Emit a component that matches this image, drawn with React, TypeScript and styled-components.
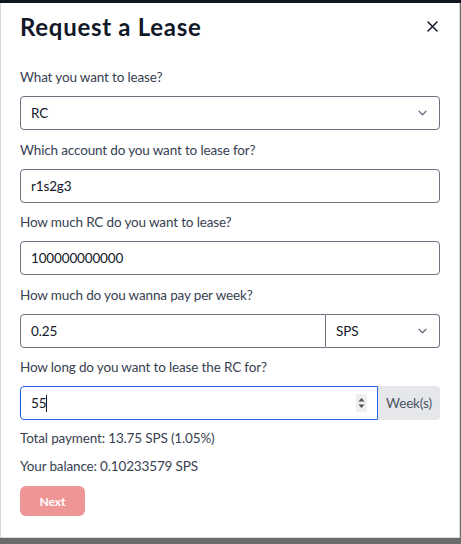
import React from "react";
import styled, { createGlobalStyle } from "styled-components";

const Global = createGlobalStyle`
  html, body { margin: 0; padding: 0; }
  body { font-family: Lato, "Noto Sans", sans-serif; background: #6b6b6b; }
  * { box-sizing: border-box; }
`;

const Page = styled.div`
  min-height: 100vh;
  background: #6b6b6b;
  border-top: 3px solid #0f1521;
`;

const Modal = styled.div`
  width: 460px;
  background: #ffffff;
  border: 1px solid #dadada;
  border-top: none;
  padding: 7px 19px 21px 19px;
`;

const Header = styled.div`
  display: flex;
  align-items: center;
  justify-content: space-between;
  height: 33px;
  margin-bottom: 24px;
`;

const Title = styled.h2`
  margin: 0;
  font-size: 24px;
  line-height: 32px;
  font-weight: 700;
  letter-spacing: 0.7px;
  color: #111827;
`;

const Close = styled.button`
  border: none;
  background: transparent;
  padding: 0;
  margin-right: 2px;
  width: 12px;
  height: 12px;
  display: flex;
  align-items: center;
  justify-content: center;
  cursor: pointer;
`;

const Fields = styled.div`
  display: flex;
  flex-direction: column;
  gap: 9.5px;
`;

const Field = styled.div`
  display: flex;
  flex-direction: column;
  gap: 9px;
`;

const Label = styled.label`
  font-size: 13.5px;
  letter-spacing: -0.15px;
  line-height: 20px;
  color: #374151;
`;

const Row = styled.div`
  display: flex;
  position: relative;
`;

const Control = styled.div<{ $grow?: boolean; $width?: number; $join?: "left" | "right" | "none"; $focus?: boolean }>`
  position: relative;
  height: 34px;
  flex: ${(p) => (p.$grow ? "1 1 auto" : `0 0 ${p.$width}px`)};
  border: 1px solid ${(p) => (p.$focus ? "#2563eb" : "#6b7280")};
  border-radius: ${(p) =>
    p.$join === "left" ? "4px 0 0 4px" : p.$join === "right" ? "0 4px 4px 0" : "4px"};
  ${(p) => (p.$join === "right" ? "border-left: none;" : "")}
  display: flex;
  align-items: center;
  background: #fff;
`;

const TextInput = styled.input`
  width: 100%;
  height: 100%;
  border: none;
  outline: none;
  background: transparent;
  padding: 0 10px;
  font-family: Lato, "Noto Sans", sans-serif;
  font-size: 13.5px;
  letter-spacing: -0.15px;
  color: #111827;
  caret-color: #111827;
`;

const SelectText = styled.span`
  flex: 1;
  padding-left: 10px;
  font-size: 13.5px;
  letter-spacing: -0.15px;
  color: #111827;
`;

const Chevron = styled.svg`
  margin-right: 12px;
  flex: none;
`;

const Spinner = styled.svg`
  position: absolute;
  right: 10px;
  top: 7px;
`;

const Caret = styled.span`
  position: absolute;
  left: 25px;
  top: 8px;
  width: 1px;
  height: 17px;
  background: #111827;
`;

const Addon = styled.div`
  flex: 0 0 62px;
  height: 34px;
  background: #e5e7eb;
  border-radius: 0 4px 4px 0;
  display: flex;
  align-items: center;
  justify-content: center;
  font-size: 13.5px;
  letter-spacing: -0.15px;
  color: #4b5563;
`;

const Footer = styled.div`
  display: flex;
  flex-direction: column;
  align-items: flex-start;
  gap: 8px;
  margin-top: 8px;
`;

const Info = styled.p`
  margin: 0;
  font-size: 13.5px;
  letter-spacing: -0.15px;
  line-height: 20px;
  color: #374151;
`;

const NextButton = styled.button`
  margin-top: 2px;
  width: 65px;
  height: 30px;
  border: none;
  border-radius: 6px;
  background: #ee9595;
  color: #ffffff;
  font-family: Lato, "Noto Sans", sans-serif;
  font-size: 12px;
  font-weight: 700;
  cursor: not-allowed;
`;

const ChevronIcon = () => (
  <Chevron width="9" height="6" viewBox="0 0 9 6" fill="none">
    <path d="M1 1.2l3.5 3.5L8 1.2" stroke="#6b7280" strokeWidth="1.4" strokeLinecap="round" strokeLinejoin="round" />
  </Chevron>
);

export default function App() {
  return (
    <>
      <Global />
      <Page>
        <Modal>
          <Header>
            <Title>Request a Lease</Title>
            <Close aria-label="Close">
              <svg width="11" height="11" viewBox="0 0 11 11">
                <path d="M1 1l9 9M10 1l-9 9" stroke="#111827" strokeWidth="1.5" strokeLinecap="round" />
              </svg>
            </Close>
          </Header>
          <Fields>
            <Field>
              <Label>What you want to lease?</Label>
              <Control $grow $join="none">
                <SelectText>RC</SelectText>
                <ChevronIcon />
              </Control>
            </Field>
            <Field>
              <Label>Which account do you want to lease for?</Label>
              <Control $grow $join="none">
                <TextInput defaultValue="r1s2g3" />
              </Control>
            </Field>
            <Field>
              <Label>How much RC do you want to lease?</Label>
              <Control $grow $join="none">
                <TextInput defaultValue="100000000000" />
              </Control>
            </Field>
            <Field>
              <Label>How much do you wanna pay per week?</Label>
              <Row>
                <Control $grow $join="left">
                  <TextInput defaultValue="0.25" />
                </Control>
                <Control $width={114} $join="right">
                  <SelectText>SPS</SelectText>
                  <ChevronIcon />
                </Control>
              </Row>
            </Field>
            <Field>
              <Label>How long do you want to lease the RC for?</Label>
              <Row>
                <Control $grow $join="left" $focus>
                  <TextInput defaultValue="55" />
                  <Caret />
                  <Spinner width="11" height="18" viewBox="0 0 11 18">
                    <rect x="0" y="0" width="11" height="18" fill="#efefef" />
                    <path d="M2.5 7.5L5.5 4l3 3.5z" fill="#505050" />
                    <path d="M2.5 10.5L5.5 14l3-3.5z" fill="#505050" />
                  </Spinner>
                </Control>
                <Addon>Week(s)</Addon>
              </Row>
            </Field>
          </Fields>
          <Footer>
            <Info>Total payment: 13.75 SPS (1.05%)</Info>
            <Info>Your balance: 0.10233579 SPS</Info>
            <NextButton disabled>Next</NextButton>
          </Footer>
        </Modal>
      </Page>
    </>
  );
}
